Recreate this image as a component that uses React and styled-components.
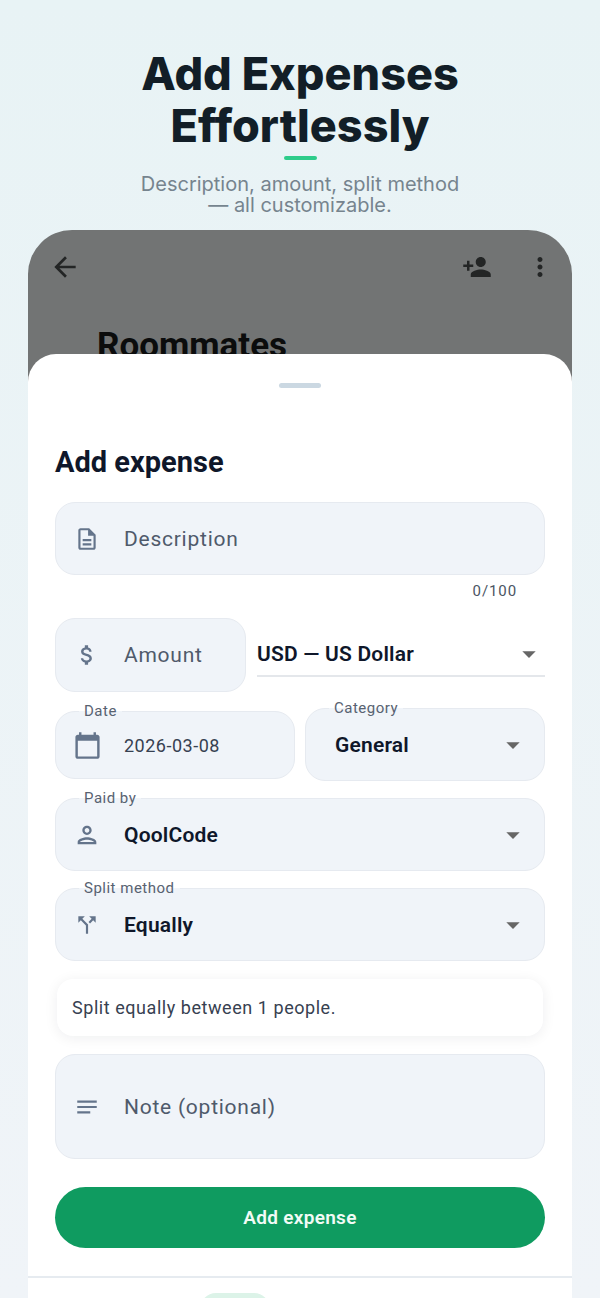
import React from "react";
import styled, { createGlobalStyle } from "styled-components";
import {
	MdArrowBack,
	MdPersonAdd,
	MdMoreVert,
	MdOutlineDescription,
	MdAttachMoney,
	MdCalendarToday,
	MdOutlinePerson,
	MdCallSplit,
	MdNotes,
	MdArrowDropDown,
} from "react-icons/md";

const ui_font = `Roboto, "Liberation Sans", sans-serif`;
const head_font = `Inter, "Open Sans", sans-serif`;
const field_bg = "#f0f4f9";
const field_border = "#e6eaf0";
const icon_color = "#64748b";
const ink = "#0f172a";

const GlobalStyle = createGlobalStyle`
	html, body {
		margin: 0;
		padding: 0;
		height: 1298px;
		overflow: hidden;
		background: #f0f4f8;
	}
	* { box-sizing: border-box; }
`;

// Root
const Page = styled.div`
	width: 600px;
	height: 1298px;
	overflow: hidden;
	display: flex;
	flex-direction: column;
	align-items: center;
	background: linear-gradient(180deg, #e8f3f5 0%, #f0f4f8 100%);
`;

// Marketing header
const Title = styled.h1`
	margin: 48px 0 0;
	font-family: ${head_font};
	font-size: 45px;
	font-weight: 800;
	line-height: 52px;
	text-align: center;
	color: #121e27;
`;
const Accent = styled.div`
	width: 33px;
	height: 4px;
	margin-top: 4px;
	border-radius: 2px;
	background: #2ecc8a;
`;
const Subtitle = styled.p`
	margin: 14px 0 0;
	font-family: ${head_font};
	font-size: 20px;
	line-height: 21px;
	text-align: center;
	color: #76848e;
`;

// Phone frame and the dimmed screen behind the sheet
const Phone = styled.div`
	position: relative;
	flex: 1;
	width: 544px;
	margin-top: 14px;
	border-radius: 44px 44px 0 0;
	overflow: hidden;
	background: #727474;
`;
const AppBar = styled.div`
	display: flex;
	align-items: center;
	justify-content: space-between;
	padding: 21px 17px 0 21px;
	color: #232525;
`;
const AppBarRight = styled.div`
	display: flex;
	align-items: center;
	gap: 33px;
`;
const GroupName = styled.div`
	margin: 42px 0 0 69px;
	font-family: ${ui_font};
	font-size: 35px;
	font-weight: 700;
	color: #0b0c0c;
`;

// Bottom sheet
const Sheet = styled.div`
	position: absolute;
	left: 0;
	right: 0;
	top: 124px;
	bottom: 0;
	display: flex;
	flex-direction: column;
	border-radius: 28px 28px 0 0;
	background: #fff;
`;
const Handle = styled.div`
	flex: none;
	align-self: center;
	width: 42px;
	height: 5px;
	margin-top: 29px;
	border-radius: 3px;
	background: #cbd8e2;
`;
const Form = styled.div`
	display: flex;
	flex: none;
	flex-direction: column;
	padding: 0 27px;
`;
const SheetTitle = styled.h2`
	margin: 57px 0 23px;
	height: 34px;
	font-family: ${ui_font};
	font-size: 29px;
	font-weight: 700;
	line-height: 34px;
	color: ${ink};
`;
const Field = styled.div`
	position: relative;
	display: flex;
	align-items: center;
	flex: ${(p) => (p.$width ? `0 0 ${p.$width}px` : "none")};
	height: ${(p) => p.$height || 73}px;
	margin-top: ${(p) => p.$top || 0}px;
	padding: 0 15px 0 ${(p) => p.$pad || 13}px;
	border: 1px solid ${field_border};
	border-radius: 20px;
	background: ${field_bg};
	color: ${icon_color};
`;
const IconSlot = styled.div`
	display: flex;
	flex: 0 0 36px;
	align-items: center;
	justify-content: center;
	margin-right: 19px;
`;
const Placeholder = styled.span`
	font-family: ${ui_font};
	font-size: 21px;
	letter-spacing: 0.75px;
	color: #4f5a6b;
`;
const DateValue = styled.span`
	font-family: ${ui_font};
	font-size: 18px;
	letter-spacing: 0.5px;
	color: #374151;
`;
const Value = styled.span`
	flex: 1;
	font-family: ${ui_font};
	font-size: 21px;
	font-weight: 600;
	letter-spacing: 0.2px;
	color: ${ink};
`;
const FloatLabel = styled.span`
	position: absolute;
	left: 23px;
	top: -10px;
	padding: 0 5px;
	font-family: ${ui_font};
	font-size: 15px;
	line-height: 18px;
	letter-spacing: 0.5px;
	color: #586271;
	background: linear-gradient(180deg, #fff 50%, ${field_bg} 50%);
`;
const Counter = styled.div`
	margin: 7px 28px 0 0;
	height: 18px;
	font-family: ${ui_font};
	font-size: 15px;
	line-height: 18px;
	letter-spacing: 0.9px;
	text-align: right;
	color: #4b5563;
`;
const Row = styled.div`
	display: flex;
	align-items: flex-start;
	gap: ${(p) => p.$gap || 10}px;
	margin-top: ${(p) => p.$top || 0}px;
`;
const CurrencySelect = styled.div`
	display: flex;
	flex: 1;
	align-items: center;
	height: 44px;
	margin-top: 15px;
	border-bottom: 2px solid #e4e7eb;
`;
const DropArrow = styled(MdArrowDropDown)`
	flex: none;
	color: #666;
`;
const InfoCard = styled.div`
	display: flex;
	align-items: center;
	height: 57px;
	margin: 18px 2px 0;
	padding: 0 15px;
	border-radius: 16px;
	background: #fff;
	box-shadow: 0 2px 14px rgba(15, 23, 42, 0.07);
	font-family: ${ui_font};
	font-size: 18px;
	letter-spacing: 0.55px;
	color: #374151;
`;
const SubmitButton = styled.button`
	height: 61px;
	margin-top: 28px;
	border: none;
	border-radius: 31px;
	background: #0f9b60;
	font-family: ${ui_font};
	font-size: 19px;
	font-weight: 600;
	letter-spacing: 0.3px;
	color: #f2fbf6;
`;

// Bottom navigation, cut off by the page edge
const BottomNav = styled.div`
	display: flex;
	flex: none;
	height: 60px;
	margin-top: 28px;
	padding-top: 15px;
	border-top: 2px solid #e6ebf0;
`;
const NavChip = styled.div`
	width: 70px;
	height: 32px;
	margin-left: 172px;
	border-radius: 16px;
	background: #dcf3e8;
`;

const App = () => {
	return (
		<Page>
			<GlobalStyle />
			<Title>
				Add Expenses
				<br />
				Effortlessly
			</Title>
			<Accent />
			<Subtitle>
				Description, amount, split method
				<br />— all customizable.
			</Subtitle>

			<Phone>
				<AppBar>
					<MdArrowBack size={32} />
					<AppBarRight>
						<MdPersonAdd size={30} />
						<MdMoreVert size={30} />
					</AppBarRight>
				</AppBar>
				<GroupName>Roommates</GroupName>

				<Sheet>
					<Handle />
					<Form>
						<SheetTitle>Add expense</SheetTitle>

						<Field>
							<IconSlot>
								<MdOutlineDescription size={26} />
							</IconSlot>
							<Placeholder>Description</Placeholder>
						</Field>
						<Counter>0/100</Counter>

						<Row $top={18} $gap={11}>
							<Field $width={191} $height={74}>
								<IconSlot>
									<MdAttachMoney size={26} />
								</IconSlot>
								<Placeholder>Amount</Placeholder>
							</Field>
							<CurrencySelect>
								<Value>USD — US Dollar</Value>
								<DropArrow size={32} />
							</CurrencySelect>
						</Row>

						<Row $top={16}>
							<Field $width={240} $height={68} $top={3}>
								<FloatLabel>Date</FloatLabel>
								<IconSlot>
									<MdCalendarToday size={29} />
								</IconSlot>
								<DateValue>2026-03-08</DateValue>
							</Field>
							<Field $width={240} $pad={29}>
								<FloatLabel>Category</FloatLabel>
								<Value>General</Value>
								<DropArrow size={32} />
							</Field>
						</Row>

						<Field $top={17}>
							<FloatLabel>Paid by</FloatLabel>
							<IconSlot>
								<MdOutlinePerson size={28} />
							</IconSlot>
							<Value>QoolCode</Value>
							<DropArrow size={32} />
						</Field>

						<Field $top={17}>
							<FloatLabel>Split method</FloatLabel>
							<IconSlot>
								<MdCallSplit size={26} />
							</IconSlot>
							<Value>Equally</Value>
							<DropArrow size={32} />
						</Field>

						<InfoCard>Split equally between 1 people.</InfoCard>

						<Field $top={18} $height={105}>
							<IconSlot>
								<MdNotes size={26} />
							</IconSlot>
							<Placeholder>Note (optional)</Placeholder>
						</Field>

						<SubmitButton>Add expense</SubmitButton>
					</Form>
					<BottomNav>
						<NavChip />
					</BottomNav>
				</Sheet>
			</Phone>
		</Page>
	);
};

export default App;
